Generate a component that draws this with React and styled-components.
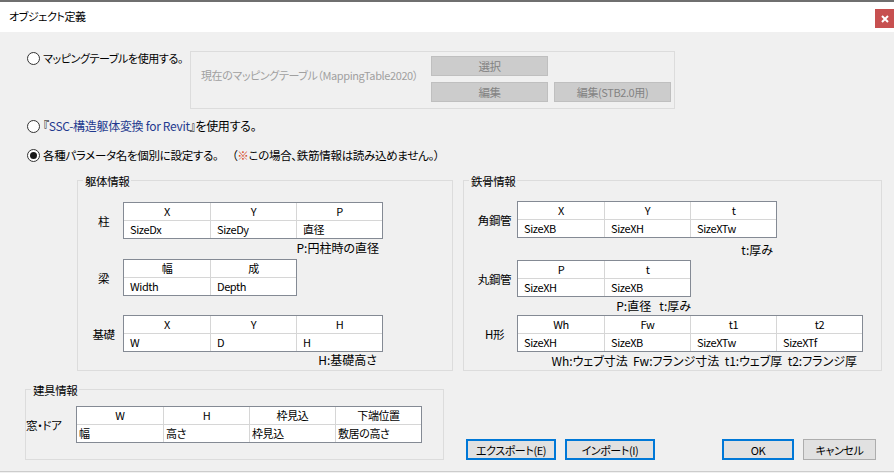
import React from 'react';
import styled, { createGlobalStyle } from 'styled-components';

const Global = createGlobalStyle`
  html, body { margin: 0; padding: 0; }
  body {
    background: #f0f0f0;
    font-family: "Noto Sans CJK JP", "Noto Sans", sans-serif;
    font-size: 11px;
    letter-spacing: -0.4px;
    color: #000;
    font-feature-settings: "palt";
  }
  * { box-sizing: border-box; }
`;

const Window = styled.div`
  width: 894px;
  height: 473px;
  display: flex;
  flex-direction: column;
  background: #f0f0f0;
  overflow: hidden;
  border-top: 2px solid #6f6f6f;
`;

const TitleBar = styled.div`
  height: 30px;
  flex: 0 0 30px;
  background: #fff;
  display: flex;
  justify-content: space-between;
  align-items: flex-start;
  padding-left: 9px;
`;

const Title = styled.div`
  margin-top: 7px;
  line-height: 14px;
  font-size: 11px;
`;

const CloseButton = styled.div`
  margin-top: 7px;
  width: 19px;
  height: 19px;
  background: #c75050;
  display: flex;
  align-items: center;
  justify-content: center;
`;

const Body = styled.div`
  display: flex;
  flex-direction: column;
`;

const Row = styled.div`
  display: flex;
  align-items: ${(p) => p.$align || 'flex-start'};
  margin-top: ${(p) => p.$mt || 0}px;
  padding-left: ${(p) => p.$pl || 0}px;
  gap: ${(p) => p.$gap || 0}px;
`;

const RadioOption = styled.label`
  display: flex;
  align-items: center;
  gap: 3px;
  height: 14px;
  line-height: 14px;
  white-space: pre;
  min-width: 0;
  font-size: ${(p) => p.$fs || 11}px;
  letter-spacing: ${(p) => (p.$ls ?? -0.4)}px;
  flex: 0 0 ${(p) => (p.$w ? `${p.$w}px` : 'auto')};
`;

const RadioCircle = styled.span`
  position: relative;
  width: 13px;
  height: 13px;
  flex: 0 0 13px;
  border-radius: 50%;
  border: 1px solid #333;
  background: #fff;
  &::after {
    content: '';
    display: ${(p) => (p.$checked ? 'block' : 'none')};
    position: absolute;
    left: 2px;
    top: 2px;
    width: 7px;
    height: 7px;
    border-radius: 50%;
    background: #1a1a1a;
  }
`;

const Accent = styled.span`
  color: ${(p) => p.$color};
`;

const MappingBox = styled.div`
  width: 485px;
  height: 58px;
  flex: 0 0 485px;
  border: 1px solid #dcdcdc;
  display: grid;
  grid-template-columns: 224px 117px 117px;
  grid-template-rows: 20px 20px;
  column-gap: 6px;
  row-gap: 6px;
  padding: 4px 0 0 10px;
`;

const MappingText = styled.div`
  grid-row: 1 / 3;
  grid-column: 1;
  align-self: start;
  margin-top: 12px;
  line-height: 14px;
  color: #a0a0a0;
  white-space: nowrap;
`;

const DisabledButton = styled.div`
  grid-column: ${(p) => p.$col};
  grid-row: ${(p) => p.$row};
  background: #cccccc;
  border: 1px solid #bfbfbf;
  color: #838383;
  display: flex;
  align-items: center;
  justify-content: center;
  line-height: 14px;
  font-size: ${(p) => p.$fs || 11.5}px;
`;

const Group = styled.div`
  position: relative;
  border: 1px solid #dcdcdc;
  width: ${(p) => p.$w}px;
  height: ${(p) => p.$h}px;
  padding-top: ${(p) => p.$pt}px;
  padding-left: ${(p) => p.$pl}px;
  display: flex;
  flex-direction: column;
  flex: 0 0 auto;
`;

const GroupTitle = styled.span`
  position: absolute;
  top: -7px;
  left: 5px;
  padding: 0 2px;
  line-height: 14px;
  font-size: 11.5px;
  background: #f0f0f0;
`;

const Block = styled.div`
  display: flex;
  align-items: center;
  margin-top: ${(p) => p.$mt || 0}px;
`;

const RowLabel = styled.div`
  width: ${(p) => p.$w}px;
  flex: 0 0 ${(p) => p.$w}px;
  text-align: ${(p) => p.$align || 'center'};
  white-space: nowrap;
  line-height: 14px;
  font-size: 11.5px;
`;

const Caption = styled.div`
  margin-left: ${(p) => p.$ml}px;
  width: ${(p) => p.$w}px;
  margin-top: ${(p) => p.$mt || 0}px;
  padding-right: ${(p) => p.$pr || 0}px;
  height: 14px;
  line-height: 14px;
  font-size: 12px;
  letter-spacing: 0;
  text-align: right;
  white-space: pre;
`;

const Table = styled.div`
  display: grid;
  grid-template-columns: repeat(${(p) => p.$cols}, 86px);
  border: 1px solid #848a94;
  background: #fff;
`;

const Cell = styled.div`
  height: ${(p) => (p.$head ? 17 : 18)}px;
  line-height: 17px;
  border-left: ${(p) => (p.$first ? 'none' : '1px solid #d6d6d6')};
  border-top: ${(p) => (p.$head ? 'none' : '1px solid #d6d6d6')};
  text-align: ${(p) => (p.$head ? 'center' : 'left')};
  padding-left: ${(p) => (p.$head ? 0 : p.$pad)}px;
  white-space: nowrap;
  overflow: hidden;
`;

const ButtonGroup = styled.div`
  display: flex;
  margin-left: 22px;
`;

const Button = styled.div`
  width: ${(p) => p.$w}px;
  height: 21px;
  margin-left: ${(p) => p.$ml || 0}px;
  background: #e1e1e1;
  border: ${(p) => (p.$primary ? '2px solid #0078d7' : '1px solid #adadad')};
  display: flex;
  align-items: center;
  justify-content: center;
  line-height: 14px;
  white-space: nowrap;
`;

const BottomRule = styled.div`
  margin-top: 11px;
  border-top: 1px solid #cccccc;
`;

function ParamTable({ head, data, pad = 6 }) {
  return (
    <Table $cols={head.length}>
      {head.map((h, i) => (
        <Cell key={`h${i}`} $head $first={i === 0}>{h}</Cell>
      ))}
      {data.map((d, i) => (
        <Cell key={`d${i}`} $first={i === 0} $pad={pad}>{d}</Cell>
      ))}
    </Table>
  );
}

const tableWidth = (n) => n * 86 + 2;

export default function App() {
  return (
    <>
      <Global />
      <Window>
        <TitleBar>
          <Title>オブジェクト定義</Title>
          <CloseButton>
            <svg width="8" height="8" viewBox="0 0 8 8">
              <path d="M1 1 L7 7 M7 1 L1 7" stroke="#fff" strokeWidth="2" />
            </svg>
          </CloseButton>
        </TitleBar>
        <Body>
          <Row $mt={19} $pl={27}>
            <RadioOption $w={163}>
              <RadioCircle />
              マッピングテーブルを使用する。
            </RadioOption>
            <MappingBox>
              <MappingText>現在のマッピングテーブル（MappingTable2020）</MappingText>
              <DisabledButton $col={2} $row={1}>選択</DisabledButton>
              <DisabledButton $col={2} $row={2}>編集</DisabledButton>
              <DisabledButton $col={3} $row={2} $fs={11}>編集(STB2.0用)</DisabledButton>
            </MappingBox>
          </Row>
          <Row $mt={10} $pl={27}>
            <RadioOption $fs={12} $ls={-0.3}>
              <RadioCircle />
              <span>
                『<Accent $color="#1f3a8f">SSC-構造躯体変換 for Revit</Accent>』を使用する。
              </span>
            </RadioOption>
          </Row>
          <Row $mt={15} $pl={27}>
            <RadioOption $fs={11.5} $ls={-0.3}>
              <RadioCircle $checked />
              <span>
                {'各種パラメータ名を個別に設定する。　 （'}<Accent $color="#d5481e">※</Accent>この場合、鉄筋情報は読み込めません。）
              </span>
            </RadioOption>
          </Row>
          <Row $mt={18} $pl={77} $gap={10}>
            <Group $w={376} $h={191} $pt={21} $pl={6}>
              <GroupTitle>躯体情報</GroupTitle>
              <Block>
                <RowLabel $w={39}>柱</RowLabel>
                <ParamTable head={['X', 'Y', 'P']} data={['SizeDx', 'SizeDy', '直径']} />
              </Block>
              <Caption $ml={39} $w={tableWidth(3)} $mt={2} $pr={4}>P:円柱時の直径</Caption>
              <Block $mt={4}>
                <RowLabel $w={39}>梁</RowLabel>
                <ParamTable head={['幅', '成']} data={['Width', 'Depth']} />
              </Block>
              <Block $mt={19}>
                <RowLabel $w={39}>基礎</RowLabel>
                <ParamTable head={['X', 'Y', 'H']} data={['W', 'D', 'H']} />
              </Block>
              <Caption $ml={39} $w={tableWidth(3)} $mt={1} $pr={6}>H:基礎高さ</Caption>
            </Group>
            <Group $w={419} $h={191} $pt={20} $pl={8}>
              <GroupTitle>鉄骨情報</GroupTitle>
              <Block>
                <RowLabel $w={45}>角鋼管</RowLabel>
                <ParamTable head={['X', 'Y', 't']} data={['SizeXB', 'SizeXH', 'SizeXTw']} />
              </Block>
              <Caption $ml={45} $w={tableWidth(3)} $mt={5} $pr={4}>t:厚み</Caption>
              <Block $mt={3}>
                <RowLabel $w={45}>丸鋼管</RowLabel>
                <ParamTable head={['P', 't']} data={['SizeXH', 'SizeXB']} />
              </Block>
              <Caption $ml={45} $w={tableWidth(2)} $mt={2} $pr={0}>{'P:直径   t:厚み'}</Caption>
              <Block $mt={2}>
                <RowLabel $w={45}>H形</RowLabel>
                <ParamTable head={['Wh', 'Fw', 't1', 't2']} data={['SizeXH', 'SizeXB', 'SizeXTw', 'SizeXTf']} />
              </Block>
              <Caption $ml={45} $w={tableWidth(4)} $mt={2} $pr={6}>
                {'Wh:ウェブ寸法  Fw:フランジ寸法  t1:ウェブ厚  t2:フランジ厚'}
              </Caption>
            </Group>
          </Row>
          <Row $mt={18} $pl={25} $align="flex-end">
            <Group $w={419} $h={71} $pt={16} $pl={0}>
              <GroupTitle>建具情報</GroupTitle>
              <Block>
                <RowLabel $w={50} $align="left">窓・ドア</RowLabel>
                <ParamTable head={['W', 'H', '枠見込', '下端位置']} data={['幅', '高さ', '枠見込', '敷居の高さ']} pad={2} />
              </Block>
            </Group>
            <ButtonGroup>
              <Button $w={90} $primary>エクスポート(E)</Button>
              <Button $w={90} $ml={9} $primary>インポート(I)</Button>
              <Button $w={72} $ml={67} $primary>OK</Button>
              <Button $w={73} $ml={9}>キャンセル</Button>
            </ButtonGroup>
          </Row>
          <BottomRule />
        </Body>
      </Window>
    </>
  );
}
